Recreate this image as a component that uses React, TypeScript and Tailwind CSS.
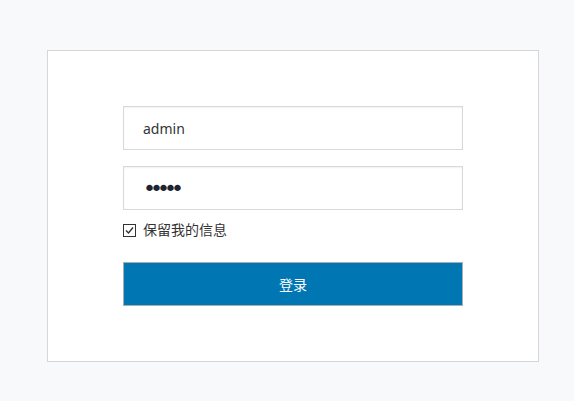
import { useState } from 'react';

export default function App() {
  const [remember, setRemember] = useState(true);

  return (
    <div className="min-h-[401px] w-full bg-[#f8f9fb] pt-[50px] pl-[47px] font-['Noto_Sans','Noto_Sans_CJK_SC',sans-serif]">
      <div className="h-[312px] w-[492px] border border-[#d6d6d6] bg-white pl-[75px] pt-[55px]">
        <form className="flex w-[340px] flex-col" onSubmit={(e) => e.preventDefault()}>
          <input
            type="text"
            defaultValue="admin"
            className="h-[44px] w-full border border-[#d9d9d9] px-[19px] text-[14px] text-[#333] shadow-[inset_0_1px_2px_rgba(0,0,0,0.06)] outline-none"
          />
          <input
            type="password"
            defaultValue="admin"
            className="mt-[16px] h-[44px] w-full border border-[#d9d9d9] px-[19px] font-['DejaVu_Sans',sans-serif] text-[22px] tracking-[-6px] text-[#1e2530] shadow-[inset_0_1px_2px_rgba(0,0,0,0.06)] outline-none"
          />
          <label className="mt-[12px] flex h-[16px] cursor-pointer items-center gap-[7px] text-[14px] leading-none text-[#333]">
            <span
              onClick={() => setRemember(!remember)}
              className="flex h-[13px] w-[13px] items-center justify-center border border-[#333] bg-white"
            >
              {remember && (
                <svg width="9" height="9" viewBox="0 0 9 9" fill="none">
                  <path d="M1 4.5 L3.5 7 L8 1.5" stroke="#333" strokeWidth="1.4" />
                </svg>
              )}
            </span>
            <span>保留我的信息</span>
          </label>
          <button
            type="submit"
            className="mt-[24px] h-[44px] w-full border border-[#a8aeb3] bg-[#0077b3] text-[14px] text-white"
          >
            登录
          </button>
        </form>
      </div>
    </div>
  );
}
